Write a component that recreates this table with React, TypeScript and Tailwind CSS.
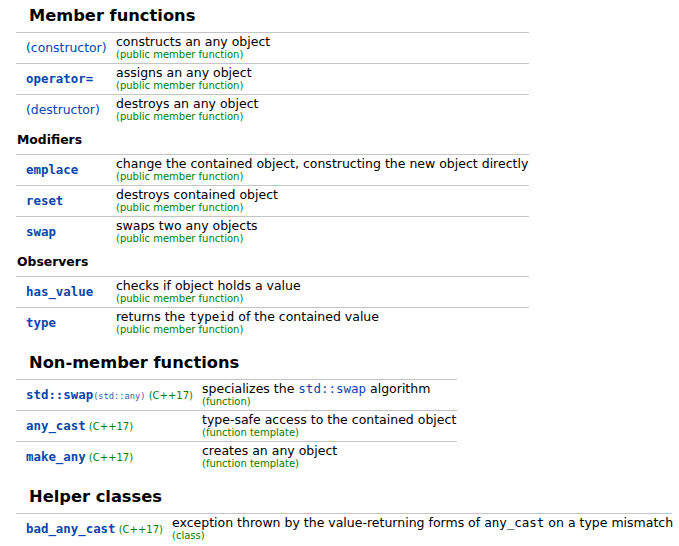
import type { ReactNode } from "react";

const sans = "font-['DejaVu_Sans',sans-serif]";
const mono = "font-['DejaVu_Sans_Mono',monospace]";

function Heading({ children, first }: { children: ReactNode; first?: boolean }) {
  return (
    <h3
      className={`${first ? "pt-[6px]" : "pt-[15px]"} pb-[6px] pl-[29px] text-[16.3px] leading-[20px] font-bold text-black`}
    >
      {children}
    </h3>
  );
}

function SubHead({ children }: { children: ReactNode }) {
  return (
    <div className="pl-[17px] pt-[5px] pb-[5px] text-[12.4px] leading-[19px] font-bold text-black">
      {children}
    </div>
  );
}

function Row({
  name,
  desc,
  kind,
  nameWidth,
}: {
  name: ReactNode;
  desc: ReactNode;
  kind: string;
  nameWidth: string;
}) {
  return (
    <div className="flex border-t border-[#c4c4c4]">
      <div className={`${nameWidth} shrink-0 pl-[10px] flex items-center whitespace-nowrap text-[12.4px]`}>
        {name}
      </div>
      <div className="pt-px pb-[2px]">
        <div className="text-[12.5px] leading-[15px] whitespace-nowrap">{desc}</div>
        <div className="text-[10px] leading-[12px] text-[#008000]">{kind}</div>
      </div>
    </div>
  );
}

const Fn = ({ children }: { children: ReactNode }) => (
  <span className={`${mono} text-[12.4px] font-bold text-[#0645ad]`}>{children}</span>
);
const Paren = ({ children }: { children: ReactNode }) => (
  <span className="text-[#0645ad]">{children}</span>
);
const Since = () => <span className="text-[10px] text-[#008000]"> (C++17)</span>;

export default function App() {
  const pmf = "(public member function)";
  const w1 = "w-[100px]";
  const w2 = "w-[186px]";
  const w3 = "w-[156px]";

  return (
    <div className={`${sans} text-[12.5px] text-black bg-white min-h-screen`}>
      <Heading first>Member functions</Heading>
      <div className="ml-[16px] w-[513px]">
        <Row nameWidth={w1} name={<Paren>(constructor)</Paren>} desc="constructs an any object" kind={pmf} />
        <Row nameWidth={w1} name={<Fn>operator=</Fn>} desc="assigns an any object" kind={pmf} />
        <Row nameWidth={w1} name={<Paren>(destructor)</Paren>} desc="destroys an any object" kind={pmf} />
      </div>

      <SubHead>Modifiers</SubHead>
      <div className="ml-[16px] w-[513px]">
        <Row
          nameWidth={w1}
          name={<Fn>emplace</Fn>}
          desc="change the contained object, constructing the new object directly"
          kind={pmf}
        />
        <Row nameWidth={w1} name={<Fn>reset</Fn>} desc="destroys contained object" kind={pmf} />
        <Row nameWidth={w1} name={<Fn>swap</Fn>} desc="swaps two any objects" kind={pmf} />
      </div>

      <SubHead>Observers</SubHead>
      <div className="ml-[16px] w-[513px]">
        <Row nameWidth={w1} name={<Fn>has_value</Fn>} desc="checks if object holds a value" kind={pmf} />
        <Row
          nameWidth={w1}
          name={<Fn>type</Fn>}
          desc={
            <>
              returns the <span className={mono}>typeid</span> of the contained value
            </>
          }
          kind={pmf}
        />
      </div>

      <Heading>Non-member functions</Heading>
      <div className="ml-[16px] w-[441px]">
        <Row
          nameWidth={w2}
          name={
            <span>
              <Fn>std::swap</Fn>
              <span className={`${mono} text-[8.7px] text-[#3d5ca8]`}>(std::any)</span>
              <Since />
            </span>
          }
          desc={
            <>
              specializes the <span className={`${mono} text-[#0645ad]`}>std::swap</span> algorithm
            </>
          }
          kind="(function)"
        />
        <Row
          nameWidth={w2}
          name={
            <span>
              <Fn>any_cast</Fn>
              <Since />
            </span>
          }
          desc="type-safe access to the contained object"
          kind="(function template)"
        />
        <Row
          nameWidth={w2}
          name={
            <span>
              <Fn>make_any</Fn>
              <Since />
            </span>
          }
          desc="creates an any object"
          kind="(function template)"
        />
      </div>

      <Heading>Helper classes</Heading>
      <div className="ml-[16px] w-[656px]">
        <Row
          nameWidth={w3}
          name={
            <span>
              <Fn>bad_any_cast</Fn>
              <Since />
            </span>
          }
          desc={
            <>
              exception thrown by the value-returning forms of <span className={mono}>any_cast</span> on a type
              mismatch
            </>
          }
          kind="(class)"
        />
      </div>
    </div>
  );
}
